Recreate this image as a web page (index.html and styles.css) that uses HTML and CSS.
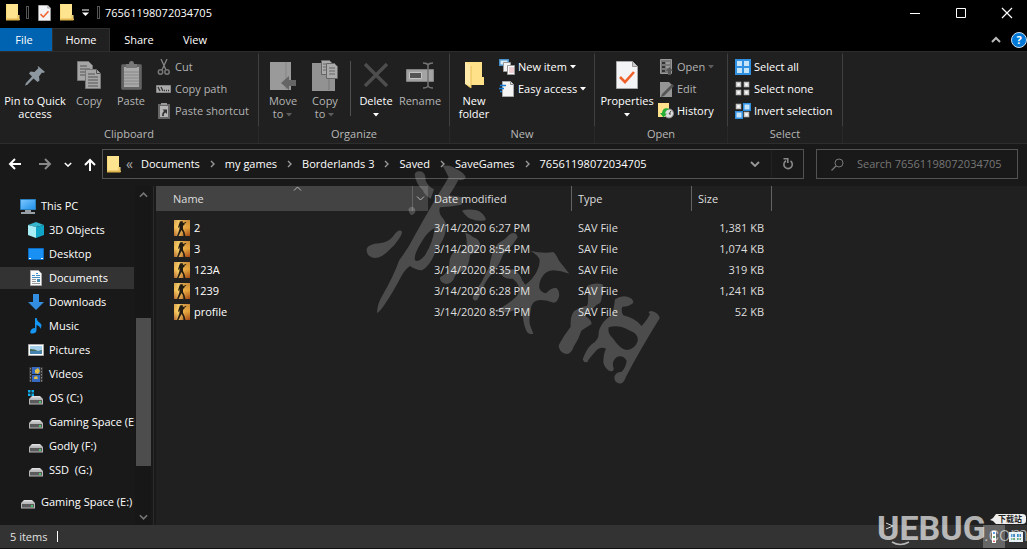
FILE: index.html
```html
<!DOCTYPE html>
<html lang="en">
<head>
<meta charset="utf-8">
<title>76561198072034705</title>
<link rel="stylesheet" href="styles.css">
</head>
<body>
<svg class="defs" aria-hidden="true">
  <defs>
    <linearGradient id="gBlue" x1="0" y1="0" x2="1" y2="1"><stop offset="0" stop-color="#7cc8ff"/><stop offset="1" stop-color="#1e8fe8"/></linearGradient>
    <linearGradient id="gGold" x1="0" y1="0" x2="0" y2="1"><stop offset="0" stop-color="#c98f3c"/><stop offset=".45" stop-color="#f0b040"/><stop offset="1" stop-color="#9a3d10"/></linearGradient>
    <linearGradient id="gGlow" x1="0" y1="0" x2="1" y2="0"><stop offset="0" stop-color="#ffe08a" stop-opacity=".2"/><stop offset=".3" stop-color="#ffdf7a" stop-opacity=".7"/><stop offset="1" stop-color="#c07020" stop-opacity=".2"/></linearGradient>
    <linearGradient id="gDrive" x1="0" y1="0" x2="0" y2="1"><stop offset="0" stop-color="#e4e4e6"/><stop offset="1" stop-color="#b8b8bc"/></linearGradient>
  </defs>
  <symbol id="folder" viewBox="0 0 14 17"><path d="M0 0h12v11h1.500v5H0z" fill="#ffe48f"/><path d="M0 15h13.500v1H0zM12 11v4" fill="#dfb650" stroke="#dfb650"/><path d="M0 0v16" stroke="#f3cd64"/></symbol>
  <symbol id="checkdoc" viewBox="0 0 22 28"><path d="M.5.500h16l5 5v22H.5z" fill="#f4f4f6" stroke="#a8a8a8"/><path d="M16.500.500v5h5" fill="#ccc" stroke="#999"/><path d="M4 16l5 5 9-10" fill="none" stroke="#f0602a" stroke-width="2.600"/></symbol>
  <symbol id="copy" viewBox="0 0 24 28"><g fill="#a6a6a6" stroke="#777"><path d="M.5.500h11l4 4v15H.5z"/><path d="M3 5h7M3 8h10M3 11h10M3 14h10" stroke="#555"/><path d="M8.500 8.500h11l4 4v15h-15z"/><path d="M19.500 8.500v4h4M11 13h7M11 16h10M11 19h10M11 22h10M11 25h10" stroke="#555"/></g></symbol>
  <symbol id="drive" viewBox="0 0 16 11"><path d="M4 2h8l3 3H1z" fill="url(#gDrive)"/><rect x="1.500" y="5.500" width="13" height="4.500" fill="#5b5b5e" stroke="#b7b7b9"/><path d="M11 8h2" stroke="#4de06a" stroke-width="1.500"/></symbol>
  <symbol id="soldier" viewBox="0 0 16 16"><rect width="16" height="16" fill="url(#gGold)"/><rect width="16" height="16" fill="url(#gGlow)"/><path d="M6 1.500l2.500-.5L9 3l3-1 .3.800-2 1 .2 1-1.500 1v3.200L10.500 12l1 4H9.500L9 12.500 7.500 10 6 13l-1.500 3H3l1.500-4 1-3V6L4.500 8 4 7.500 5 4z" fill="#231c12"/></symbol>
  <symbol id="down" viewBox="0 0 7 4"><path d="M0 0h6L3 3.500z" fill="currentColor"/></symbol>
  <symbol id="chev" viewBox="0 0 6 8"><path d="M1 1l3 3-3 3" fill="none" stroke="currentColor" stroke-width="1.400"/></symbol>
  <symbol id="caret" viewBox="0 0 10 6"><path d="M1 1l4 4 4-4" fill="none" stroke="currentColor" stroke-width="1.800"/></symbol>
</svg>

<header class="titlebar">
  <svg class="qicon" aria-hidden="true"><use href="#folder"/></svg>
  <i class="tick"></i>
  <button class="quick" aria-label="Properties"><svg width="13" height="16"><use href="#checkdoc"/></svg></button>
  <button class="quick" aria-label="New folder"><svg width="14" height="17"><use href="#folder"/></svg></button>
  <button class="quick more" aria-label="Customize toolbar"><svg width="8" height="8"><path d="M0 1h7" stroke="#fff"/><path d="M0 3.500h7L3.500 7z" fill="#fff"/></svg></button>
  <i class="tick"></i>
  <h1 class="title">76561198072034705</h1>
  <div class="controls">
    <button aria-label="Minimize"><svg width="16" height="16"><path d="M3 8.500h10" stroke="#fff"/></svg></button>
    <button aria-label="Maximize"><svg width="16" height="16"><path d="M3.500 3.500h9v9h-9z" fill="none" stroke="#fff"/></svg></button>
    <button aria-label="Close"><svg width="16" height="16"><path d="M3 3l10 10M13 3L3 13" stroke="#fff" stroke-width="1.200"/></svg></button>
  </div>
</header>

<nav class="tabs">
  <button class="tab file">File</button>
  <button class="tab home">Home</button>
  <button class="tab share">Share</button>
  <button class="tab view">View</button>
  <div class="tabtools">
    <button aria-label="Collapse ribbon"><svg width="10" height="7"><path d="M1 6l4-4 4 4" fill="none" stroke="#bbb" stroke-width="2"/></svg></button>
    <button aria-label="Help" class="help">?</button>
  </div>
</nav>

<section class="ribbon">
  <div class="group clipboard">
    <div class="tools">
      <button class="big pin"><span class="pic"><svg width="21" height="21" viewBox="0 0 21 21"><path d="M13 1l7 6-2 1-1-.500-3 4 .5 4-2 1.500-4-3.500L2 20l-2 .5L1 18l6-6.500-3-3 1.500-2 4 .5 4-4-.8-1z" fill="#8d979f"/></svg></span>Pin to Quick<br>access</button>
      <button class="big copy off"><span class="pic"><svg width="24" height="28"><use href="#copy"/></svg></span>Copy</button>
      <button class="big paste off"><span class="pic"><svg width="21" height="29" viewBox="0 0 21 29"><rect x=".5" y="3.500" width="20" height="25" rx="1" fill="#646464" stroke="#555"/><path d="M3 6h15v20H3z" fill="#a9a9a9"/><path d="M3 11h15M3 14h15M3 17h15M3 20h15M3 23h15" stroke="#888"/><path d="M5 3h3q0-3 2.500-3T13 3h3v4H5z" fill="#777"/></svg></span>Paste</button>
      <div class="rows off">
        <button class="small"><svg viewBox="0 0 16 16"><path d="M5 0l5 11M11 0L6 11" stroke="#858585" stroke-width="1.300"/><g fill="none" stroke="#777" stroke-width="1.500"><circle cx="4.500" cy="13" r="2.200"/><circle cx="11" cy="13" r="2.200"/></g></svg>Cut</button>
        <button class="small"><svg viewBox="0 0 16 16"><path d="M.5 4.500h14v7H.5z" fill="#aaa" stroke="#888"/><path d="M2 6l2 4M5 6l2 4M8 9.500h1M10 9.500h1M12 9.500h1" stroke="#333" stroke-width="1.300"/></svg>Copy path</button>
        <button class="small"><svg viewBox="0 0 16 16"><path d="M2 1h12v15H2z" fill="#666"/><path d="M4 3h8v11H4z" fill="#b5b5b5"/><path d="M5 0h6v2H5z" fill="#999"/><path d="M6 13q-.5-3 2-5L6.500 6.500H11V11L9.500 9.500Q7 11 8 13z" fill="#333"/></svg>Paste shortcut</button>
      </div>
    </div>
    <h2>Clipboard</h2>
  </div>

  <div class="group organize">
    <div class="tools">
      <button class="big w42 off"><span class="pic"><svg width="26" height="29" viewBox="0 0 26 29"><path d="M0 1h21v28H0z" fill="#9a9a9a"/><path d="M16 1v27" stroke="#858585"/><path d="M11 22l8-7v4h7v6h-7v4z" fill="#656565"/></svg></span>Move<br>to <svg class="dn"><use href="#down"/></svg></button>
      <button class="big w42 off"><span class="pic"><svg width="26" height="31" viewBox="0 0 26 31"><path d="M0 3h23v28H0z" fill="#929292"/><path d="M17 3v27" stroke="#777"/><g fill="#aaa" stroke="#666"><path d="M9.500.500h8l3 3v11h-11z"/><path d="M14.500 3.500h8l3 3v12h-11z"/><path d="M17 8h6M17 11h6M17 14h6M11 4h3M11 7h3M11 10h3"/></g></svg></span>Copy<br>to <svg class="dn"><use href="#down"/></svg></button>
      <i class="divider"></i>
      <button class="big w42"><span class="pic"><svg width="24" height="24"><path d="M1 1l22 22M23 1L1 23" stroke="#4d4d4d" stroke-width="3.400"/></svg></span>Delete<br><svg class="dn"><use href="#down"/></svg></button>
      <button class="big w46 off"><span class="pic"><svg width="28" height="27" viewBox="0 0 28 27"><path d="M1 8h26v11H1z" fill="#a4a4a4" stroke="#a0a0a0" stroke-width="1.600"/><path d="M3.500 10.500h12v6h-12z" fill="#555" stroke="#c4c4c4"/><path d="M17 1q4 0 5 2 1-2 5-2M22 2v23M17 26q4 0 5-2 1 2 5 2" fill="none" stroke="#737373" stroke-width="1.500"/></svg></span>Rename</button>
    </div>
    <h2>Organize</h2>
  </div>

  <div class="group new">
    <div class="tools">
      <button class="big w42"><span class="pic"><svg width="19" height="28" viewBox="0 0 19 28"><path d="M0 1h17v15h2v8H5z" fill="#ffe18a"/><path d="M0 1l6 4v22L0 23z" fill="#ffe9a8"/><path d="M6 5v22L2 24" fill="none" stroke="#e6bd55"/></svg></span>New<br>folder</button>
      <div class="rows">
        <button class="small"><svg viewBox="0 0 16 16"><path d="M0 0h10v7H0z" fill="#4a90c8"/><path d="M1.500 1.500h7v4h-7z" fill="#d7ecfa"/><path d="M4.500 3.500h7v9h-7z" fill="#f4f4f4" stroke="#999"/><path d="M8.500 6.500h7v9h-7z" fill="#fff" stroke="#999"/><path d="M10 9h5M10 11h5M10 13h5" stroke="#df9fa5"/></svg>New item <svg class="dn"><use href="#down"/></svg></button>
        <button class="small"><svg viewBox="0 0 16 16"><path d="M3.500.500h8l3 3v12h-11z" fill="#f5f5f5" stroke="#aaa"/><path d="M11.500.500v3h3" fill="#ddd" stroke="#888"/><path d="M1 4.500h6M0 7.500h5M1 10.500h2" stroke="#167bd2" stroke-width="1.500"/></svg>Easy access <svg class="dn"><use href="#down"/></svg></button>
      </div>
    </div>
    <h2>New</h2>
  </div>

  <div class="group open">
    <div class="tools">
      <button class="big w58"><span class="pic"><svg width="22" height="28"><use href="#checkdoc"/></svg></span>Properties<br><svg class="dn"><use href="#down"/></svg></button>
      <div class="rows">
        <button class="small off"><svg viewBox="0 0 16 16"><path d="M2.500.500h11v14h-11z" fill="#777" stroke="#999"/><path d="M4 3h3v2H4zM4 7h3v2H4zM4 11h3v2H4z" fill="#333"/><path d="M8 4h4M8 8h4" stroke="#bbb"/><path d="M8 12l3.500-4 3.500 4h-2v4h-3v-4z" fill="#555"/></svg>Open <svg class="dn"><use href="#down"/></svg></button>
        <button class="small off"><svg viewBox="0 0 16 16"><path d="M2 1h9l3 3v12H2z" fill="#959595"/><path d="M4 13L14 3l2 2L6 15l-3 1z" fill="#555"/></svg>Edit</button>
        <button class="small"><svg viewBox="0 0 16 16"><path d="M0 0h11v14H0z" fill="#ffe28b"/><circle cx="11" cy="10.500" r="4.500" fill="#ddd" stroke="#888"/><path d="M11 11l2-3M11 11h2" stroke="#444"/><path d="M2 10l3.500 4.500L9 10.500H7Q7.500 6.500 12 6 4.500 3.500 4 10z" fill="#26b035"/></svg>History</button>
      </div>
    </div>
    <h2>Open</h2>
  </div>

  <div class="group select">
    <div class="tools">
      <div class="rows">
        <button class="small"><svg viewBox="0 0 16 16"><path d="M0 0h16v16H0z" fill="#2f8fe0"/><path d="M2 2h5v5H2zM9 2h5v5H9zM2 9h5v5H2zM9 9h5v5H9z" fill="#c4e4fa"/></svg>Select all</button>
        <button class="small"><svg viewBox="0 0 16 16"><path d="M1.500 1.500h4v4h-4zM9.500 1.500h4v4h-4zM1.500 9.500h4v4h-4zM9.500 9.500h4v4h-4z" fill="#fff" stroke="#c4c4c4" stroke-width="1.500"/></svg>Select none</button>
        <button class="small"><svg viewBox="0 0 16 16"><path d="M8 0h8v8H8zM0 8h8v8H0z" fill="#2f8fe0"/><path d="M9.500 1.500h5v5h-5zM1.500 9.500h5v5h-5z" fill="#c4e4fa"/><path d="M1.500 1.500h4v4h-4zM9.500 9.500h4v4h-4z" fill="#fff" stroke="#c4c4c4" stroke-width="1.500"/></svg>Invert selection</button>
      </div>
    </div>
    <h2>Select</h2>
  </div>
</section>

<div class="navbar">
  <div class="history">
    <button aria-label="Back"><svg width="14" height="12"><path d="M13 6H2M7 1L2 6l5 5" fill="none" stroke="#fff" stroke-width="2"/></svg></button>
    <button aria-label="Forward"><svg width="14" height="12"><path d="M1 6h11M7 1l5 5-5 5" fill="none" stroke="#888" stroke-width="2"/></svg></button>
    <button aria-label="Recent locations"><svg width="8" height="5" class="white"><use href="#caret"/></svg></button>
    <button aria-label="Up"><svg width="12" height="13"><path d="M6 13V2M1 7l5-5 5 5" fill="none" stroke="#fff" stroke-width="2"/></svg></button>
  </div>
  <div class="address">
    <svg width="14" height="17"><use href="#folder"/></svg>
    <span class="laquo">«</span>
    <a href="#">Documents</a><svg class="sep"><use href="#chev"/></svg>
    <a href="#">my games</a><svg class="sep"><use href="#chev"/></svg>
    <a href="#">Borderlands 3</a><svg class="sep"><use href="#chev"/></svg>
    <a href="#">Saved</a><svg class="sep"><use href="#chev"/></svg>
    <a href="#">SaveGames</a><svg class="sep"><use href="#chev"/></svg>
    <a href="#">76561198072034705</a>
    <div class="addrtools">
      <button aria-label="Previous locations"><svg width="10" height="6"><use href="#caret"/></svg></button>
      <button aria-label="Refresh"><svg width="12" height="12"><path d="M8.500 3A4.200 4.200 0 1 1 4 2.800" fill="none" stroke="#888" stroke-width="1.600"/><path d="M1.500 0.800h4.300v4.200" fill="none" stroke="#888" stroke-width="1.600"/></svg></button>
    </div>
  </div>
  <label class="search"><svg width="13" height="13"><circle cx="8" cy="5" r="4" fill="none" stroke="#777"/><path d="M5 8l-4.500 4.500" stroke="#777" stroke-width="1.300"/></svg>
    <input type="text" aria-label="Search" placeholder="Search 76561198072034705"></label>
</div>

<main class="body">
  <aside class="side">
    <ul class="tree">
      <li class="root"><a href="#"><svg viewBox="0 0 16 16"><path d="M.5 1.500h15v10H.5z" fill="url(#gBlue)" stroke="#2b7fbd"/><path d="M5 13h6M1 15h14" stroke="#c2ccd4" stroke-width="1.400"/></svg>This PC</a></li>
      <li><a href="#"><svg viewBox="0 0 16 16"><path d="M8 0l8 3-8 2-8-2z" fill="#35b6cc"/><path d="M0 3l8 2v11l-8-3z" fill="#a9eef4"/><path d="M16 3L8 5v11l8-3z" fill="#10a5c6"/></svg>3D Objects</a></li>
      <li><a href="#"><svg viewBox="0 0 16 16"><path d="M.5 2.500h15v11H.5z" fill="#1890f4" stroke="#0b6cc0"/><path d="M1 12.500h2M13 12.500h2" stroke="#fff"/></svg>Desktop</a></li>
      <li class="active"><a href="#"><svg viewBox="0 0 16 16"><path d="M2.500.500h8l3 3v12h-11z" fill="#fafafa" stroke="#aaa"/><path d="M4 5.500h3M8 3.500h2M8 5.500h4M4 7.500h8" stroke="#3d8fc6"/><path d="M4 9.500h4M4 11.500h4M4 13.500h8" stroke="#999"/><path d="M9 9h3v3H9z" fill="#458bb4"/></svg>Documents</a></li>
      <li><a href="#"><svg viewBox="0 0 16 16"><path d="M5 0h6v8h5l-8 8-8-8h5z" fill="#338de0"/></svg>Downloads</a></li>
      <li><a href="#"><svg viewBox="0 0 16 16"><path d="M7 0h1.500Q9 3 12 5t0 6q.5-3-3.500-4v5q0 3-3.500 3.500T2.500 13 7 10z" fill="#1496f2"/></svg>Music</a></li>
      <li><a href="#"><svg viewBox="0 0 16 16"><path d="M.5 2.500h15v11H.5z" fill="#fff" stroke="#aaa"/><path d="M2 4h12v8H2z" fill="#a6d1ed"/><path d="M2 7q5 0 8 2l4-1v1H2z" fill="#486c58"/><path d="M2 9h12v3H2z" fill="#4483ad"/></svg>Pictures</a></li>
      <li><a href="#"><svg viewBox="0 0 16 16"><path d="M1 1h14v15H1z" fill="#343434"/><path d="M4 1h8v15H4z" fill="#3668bf"/><path d="M7 4l3-2 2 3-2 3-3-1zM6 11l3-1 1 3H6z" fill="#dfbd42"/><path d="M4 8.500h8" stroke="#222"/><path d="M2.500 2v14M13.500 2v14" stroke="#888" stroke-dasharray="1.500 1.500"/></svg>Videos</a></li>
      <li><a href="#"><svg viewBox="0 0 16 16"><use href="#drive" y="4" width="16" height="11"/><path d="M0 0h2.500v2.500H0zM3.500 0h2.500v2.500h-2.500zM0 3.500h2.500v2.500H0zM3.500 3.500h2.500v2.500h-2.500z" fill="#10aeea"/></svg>OS (C:)</a></li>
      <li><a href="#"><svg viewBox="0 0 16 16"><use href="#drive" y="4" width="16" height="11"/></svg>Gaming Space (E:)</a></li>
      <li><a href="#"><svg viewBox="0 0 16 16"><use href="#drive" y="4" width="16" height="11"/></svg>Godly (F:)</a></li>
      <li><a href="#"><svg viewBox="0 0 16 16"><use href="#drive" y="4" width="16" height="11"/></svg>SSD&nbsp; (G:)</a></li>
      <li class="root extra"><a href="#"><svg viewBox="0 0 16 16"><use href="#drive" y="4" width="16" height="11"/></svg>Gaming Space (E:)</a></li>
    </ul>
    <div class="scroll">
      <svg class="flip" width="9" height="6"><use href="#caret"/></svg>
      <div class="track"><i class="before"></i><i class="thumb"></i><i class="after"></i></div>
      <svg width="9" height="6"><use href="#caret"/></svg>
    </div>
  </aside>

  <section class="files">
    <table>
      <colgroup><col class="c-name"><col class="c-date"><col class="c-type"><col class="c-size"></colgroup>
      <thead><tr>
        <th class="sorted"><span class="th"><span>Name</span><svg class="flip asc" width="9" height="5" viewBox="0 0 9 5"><path d="M1 .500l3.500 3.500L8 .500" fill="none" stroke="#bbb"/></svg><span class="drop"><svg width="9" height="5" viewBox="0 0 9 5"><path d="M1 .500l3.500 3.500L8 .500" fill="none" stroke="#bbb"/></svg></span></span></th>
        <th>Date modified</th><th>Type</th><th>Size</th>
      </tr></thead>
      <tbody>
        <tr><td><span class="fname"><svg><use href="#soldier"/></svg>2</span></td><td>3/14/2020 6:27 PM</td><td>SAV File</td><td>1,381 KB</td></tr>
        <tr><td><span class="fname"><svg><use href="#soldier"/></svg>3</span></td><td>3/14/2020 8:54 PM</td><td>SAV File</td><td>1,074 KB</td></tr>
        <tr><td><span class="fname"><svg><use href="#soldier"/></svg>123A</span></td><td>3/14/2020 8:35 PM</td><td>SAV File</td><td>319 KB</td></tr>
        <tr><td><span class="fname"><svg><use href="#soldier"/></svg>1239</span></td><td>3/14/2020 6:28 PM</td><td>SAV File</td><td>1,241 KB</td></tr>
        <tr><td><span class="fname"><svg><use href="#soldier"/></svg>profile</span></td><td>3/14/2020 8:57 PM</td><td>SAV File</td><td>52 KB</td></tr>
      </tbody>
    </table>
    <svg class="stamp" viewBox="0 0 1020 720" aria-hidden="true"><path fill-rule="evenodd" d="
      M308 18Q330 12 350 28Q376 40 377 54Q372 62 355 60Q345 80 326 108Q345 106 364 112Q374 124 364 134Q330 140 300 142Q294 158 306 172Q320 186 318 206Q314 240 292 262Q272 318 246 331Q226 330 210 318Q198 325 186 345Q160 395 135 432Q120 455 111 459Q112 430 128 405Q160 350 178 300Q205 265 222 230Q250 180 276 135L326 52Q318 34 308 18Z
      M284 204Q262 215 245 245Q220 285 225 301Q236 309 255 286Q280 245 284 204Z
      M224 44Q226 32 242 34Q258 38 257 62Q264 78 282 88L272 116Q254 106 248 90Q228 72 224 44Z
      M216 140Q227 142 226 156Q220 168 212 164Q204 156 206 146Q210 140 216 140Z
      M80 266Q86 252 118 250Q145 248 160 228Q172 208 184 212Q190 218 176 238Q165 255 150 268Q126 294 104 294Q78 290 80 266Z
      M366 152Q380 146 408 150Q432 158 438 180Q415 186 397 178Q382 175 366 152Z
      M376 218Q390 222 400 232Q420 238 420 256Q415 275 390 284Q388 315 374 330Q350 338 344 350Q338 370 318 372Q298 366 300 352Q325 338 328 320Q326 290 342 276Q366 276 380 264Q382 240 376 218Z
      M510 222Q528 212 533 232Q515 262 490 282L478 310L462 335Q440 355 428 385L412 420Q400 426 398 412Q405 395 425 365L448 320Q455 270 475 250Q495 240 510 222Z
      M570 272Q610 282 640 276Q650 285 656 301L688 341Q662 332 640 331Q620 332 608 348Q596 365 598 385Q604 398 618 400Q634 382 650 384Q660 395 657 410Q650 432 636 427Q620 420 600 420Q575 420 572 450Q566 480 570 495L580 521Q564 526 558 510Q546 480 548 442Q520 456 492 457L462 454Q495 440 520 418Q542 402 536 378Q530 364 518 356Q500 358 490 350Q478 338 484 330L520 328Q540 340 546 360L556 374Q578 358 590 335Q602 312 598 296Q588 280 570 272Z
      M741 378Q760 366 788 373Q792 392 785 412Q786 430 770 434Q756 450 733 466Q755 480 755 492Q735 505 724 512Q716 538 701 560Q694 582 678 582Q656 576 656 556Q672 525 692 500Q690 470 702 454Q722 440 741 438Q748 420 741 378Z
      M825 418Q845 405 862 410Q880 415 880 428Q868 440 847 440Q842 455 850 466Q885 474 905 498Q925 475 930 462Q920 454 935 453Q958 460 959 475Q900 570 858 650Q850 674 836 670Q820 664 824 648Q830 635 844 636Q858 622 860 602Q850 585 832 590Q814 602 820 622Q824 635 812 634Q796 628 790 608Q790 580 798 566Q780 558 765 576Q745 598 742 606Q732 610 728 598Q740 565 756 552Q778 540 776 516Q780 495 800 476Q822 462 820 450Z
      M806 502Q802 520 818 534Q840 568 860 570Q885 568 893 544Q896 520 870 512Q835 492 806 502Z"/></svg>
  </section>
</main>

<footer class="status"><span>5 items</span><i></i>
  <div class="views">
    <button class="on" aria-label="Details view"><svg width="12" height="14"><path d="M4 1h4v12H4z" fill="#fff"/><path d="M5 3h2" stroke="#287bd0" stroke-width="1.500"/><path d="M5 7h2" stroke="#388548" stroke-width="1.500"/><path d="M5 11h2" stroke="#ce3434" stroke-width="1.500"/></svg></button>
    <button aria-label="Large icons view"><svg width="14" height="12"><path d="M0 1h14v10H0z" fill="#e8f1f8"/><path d="M2 3h4v3H2zM8 3h4v3H8z" fill="#3d88c3"/><path d="M2 7h4v2H2zM8 7h4v2H8z" fill="#69a782"/></svg></button>
  </div>
</footer>

<svg class="brand" viewBox="0 0 150 40" role="img" aria-label="UEBUG.com">
  <g fill="#fff" opacity=".65"><text class="bug" x="0" y="31">UEBUG</text><path d="M15 33q8 5 17 0" fill="none" stroke="#fff" stroke-width="1.500"/></g>
  <path d="M9 14l7 3-7 3" fill="none" stroke="#ddd"/>
  <text class="com" x="107" y="32">.com</text>
  <path d="M119 5h26q4 0 4 3v4q0 3-4 3h-26l-3-3-3-1 3-2z" fill="#eee"/>
  <text class="cn" x="121" y="13">下载站</text>
</svg>
</body>
</html>
```
FILE: styles.css
```css
* { box-sizing: border-box; }
body {
  margin: 0;
  height: 100vh;
  display: flex;
  flex-direction: column;
  overflow: hidden;
  position: relative;
  background: #191919;
  color: #fff;
  font: 11px/16px "Open Sans", "Noto Sans", sans-serif;
}
button { background: none; border: 0; padding: 0; margin: 0; color: inherit; font: inherit; }
a { color: inherit; text-decoration: none; }
svg { flex: none; display: block; }
h1, h2 { margin: 0; font: inherit; }
ul { margin: 0; padding: 0; list-style: none; }
.defs { position: absolute; width: 0; height: 0; }

.titlebar { flex: none; height: 28px; padding: 0 12px 3px 6px; display: flex; align-items: center; background: #000; }
.qicon { width: 14px; height: 17px; margin-right: 6px; }
.tick { width: 3px; height: 13px; border: 1px solid #555; }
.quick { margin-left: 9px; }
.quick.more { margin: 0 7px 0 8px; }
.title { margin-left: 5px; }
.controls { margin-left: auto; display: flex; gap: 30px; }

.tabs { flex: none; height: 23px; display: flex; background: #000; }
.tab { font-size: 11px; }
.file { width: 52px; background: #0063b1; padding-right: 4px; }
.home { width: 58px; background: #202020; border: 1px solid #2f2f2f; border-bottom: 0; }
.share { width: 58px; }
.view { width: 54px; }
.tabtools { margin-left: auto; display: flex; align-items: center; gap: 10px; }
.help { width: 16px; height: 16px; border-radius: 50%; background: #0078d7; border: 1px solid #cde; font-weight: 700; line-height: 14px; }

.ribbon { flex: none; height: 93px; display: flex; background: #202020; border-top: 1px solid #2d2d2d; border-bottom: 1px solid #2d2d2d; }
.group { display: flex; flex-direction: column; padding-top: 2px; border-right: 1px solid #292929; }
.group h2 { text-align: center; color: #b8b8b8; }
.tools { flex: none; height: 72px; margin-right: -1px; border-right: 1px solid #404040; display: flex; align-items: flex-start; padding: 2px 0 0 3px; }
.clipboard { width: 259px; }
.organize { width: 191px; }
.new { width: 145px; }
.open { width: 133px; }
.select { width: 115px; }
.clipboard .tools { padding-left: 0; }
.select .tools { padding-left: 7px; }
.big { line-height: 13px; text-align: center; white-space: nowrap; }
.pic { height: 38px; display: flex; align-items: center; justify-content: center; }
.pin { width: 70px; }
.copy { width: 38px; }
.paste { width: 46px; }
.w42 { width: 42px; }
.w46 { width: 46px; }
.w58 { width: 58px; }
.off { color: #b4b4b4; }
.dn { width: 7px; height: 4px; display: inline-block; vertical-align: middle; }
.off .dn { color: #5c5c5c; }
.divider { width: 1px; height: 55px; margin: 5px 4px 0; background: #505050; }
.rows { display: flex; flex-direction: column; margin-left: 2px; }
.select .rows { margin-left: 0; }
.new .rows { margin-left: 4px; }
.small { height: 22px; display: flex; align-items: center; gap: 3px; white-space: nowrap; }
.small > svg:first-child { width: 16px; height: 16px; }

.navbar { flex: none; height: 42px; padding: 5px 9px 7px 8px; display: flex; }
.history { width: 94px; display: flex; align-items: center; gap: 12px; }
.history button:nth-child(1) { margin-right: 4px; }
.white { color: #fff; }
.address { flex: 1; min-width: 0; height: 30px; border: 1px solid #535353; display: flex; align-items: center; padding-left: 4px; white-space: nowrap; }
.laquo { margin: 0 8px 0 5px; font-size: 14px; color: #aaa; }
.sep { width: 6px; height: 8px; margin: 0 9px 0 10px; color: #999; }
.addrtools { margin-left: auto; align-self: stretch; display: flex; color: #999; }
.addrtools button { width: 32px; display: flex; align-items: center; justify-content: center; }
.addrtools button + button { border-left: 1px solid #222; }
.search { width: 202px; height: 30px; margin-left: 12px; border: 1px solid #535353; display: flex; align-items: center; padding-left: 14px; gap: 13px; }
.search input { flex: 1; min-width: 0; background: none; border: 0; padding: 0; color: #fff; font: inherit; outline: 0; }
.search input::placeholder { color: #777; opacity: 1; }

.body { flex: 1; min-height: 0; display: flex; }
.side { width: 154px; flex: none; display: flex; border-right: 1px solid #2b2b2b; margin-right: 2px; }
.tree { width: 135px; padding-top: 8px; overflow: hidden; }
.tree li { height: 24px; padding-left: 28px; }
.tree .root { padding-left: 20px; }
.tree .extra { margin-top: 8px; }
.tree .active { background: #333; height: 22px; margin: 1px 1px 1px 0; }
.tree a { height: 100%; display: flex; align-items: center; gap: 5px; white-space: nowrap; }
.tree svg { width: 16px; height: 16px; }
.scroll { width: 16px; display: flex; flex-direction: column; align-items: center; background: #171717; color: #777; padding: 6px 0 5px; }
.flip { transform: scaleY(-1); }
.track { flex: 1; width: 15px; margin: 5px 0; display: flex; flex-direction: column; }
.before { flex: 115; }
.thumb { flex: 147; background: #4d4d4d; }
.after { flex: 43; }

.files { flex: 1; min-width: 0; background: #202020; position: relative; }
table { border-collapse: separate; border-spacing: 0; table-layout: fixed; width: 616px; }
.c-name { width: 272px; }
.c-date { width: 144px; }
.c-type { width: 120px; }
.c-size { width: 80px; }
th { height: 25px; padding: 0 0 0 6px; text-align: left; font-weight: 400; color: #dedede; border-right: 1px solid #636363; }
.sorted { background: #434343; padding-left: 17px; border-right: 0; }
.th { display: flex; height: 25px; align-items: center; }
.asc { align-self: flex-start; margin-left: 89px; }
.drop { margin-left: auto; width: 16px; height: 25px; border-left: 1px solid #636363; display: flex; align-items: center; justify-content: center; }
tbody::before { content: ""; display: block; height: 6px; }
td { height: 21px; padding: 0 0 0 6px; color: #dedede; }
td:first-child { padding-left: 18px; color: #fff; }
td:last-child { text-align: right; padding: 0 8px 0 0; }
.fname { display: flex; align-items: center; gap: 4px; }
.fname svg { width: 16px; height: 16px; }
.stamp { position: absolute; left: 184px; top: -26px; width: 340px; height: 240px; fill: #fff; fill-opacity: .2; pointer-events: none; }

.status { flex: none; height: 24px; background: #333; border-bottom: 1px solid #111; padding-left: 10px; display: flex; align-items: center; gap: 10px; color: #e2e2e2; }
.status i { width: 1px; height: 11px; background: #fff; }
.views { margin-left: auto; align-self: stretch; display: flex; }
.views button { width: 22px; display: flex; align-items: center; justify-content: center; }
.views .on { background: #666; }

.brand { position: absolute; right: 0; bottom: 0; width: 150px; height: 40px; pointer-events: none; }
.bug { font: 700 34px Roboto, sans-serif; }
.com { font: 300 20px Roboto, sans-serif; fill: #fff; opacity: .6; }
.cn { font: 700 8px "Noto Sans CJK SC", sans-serif; fill: #222; }
```
